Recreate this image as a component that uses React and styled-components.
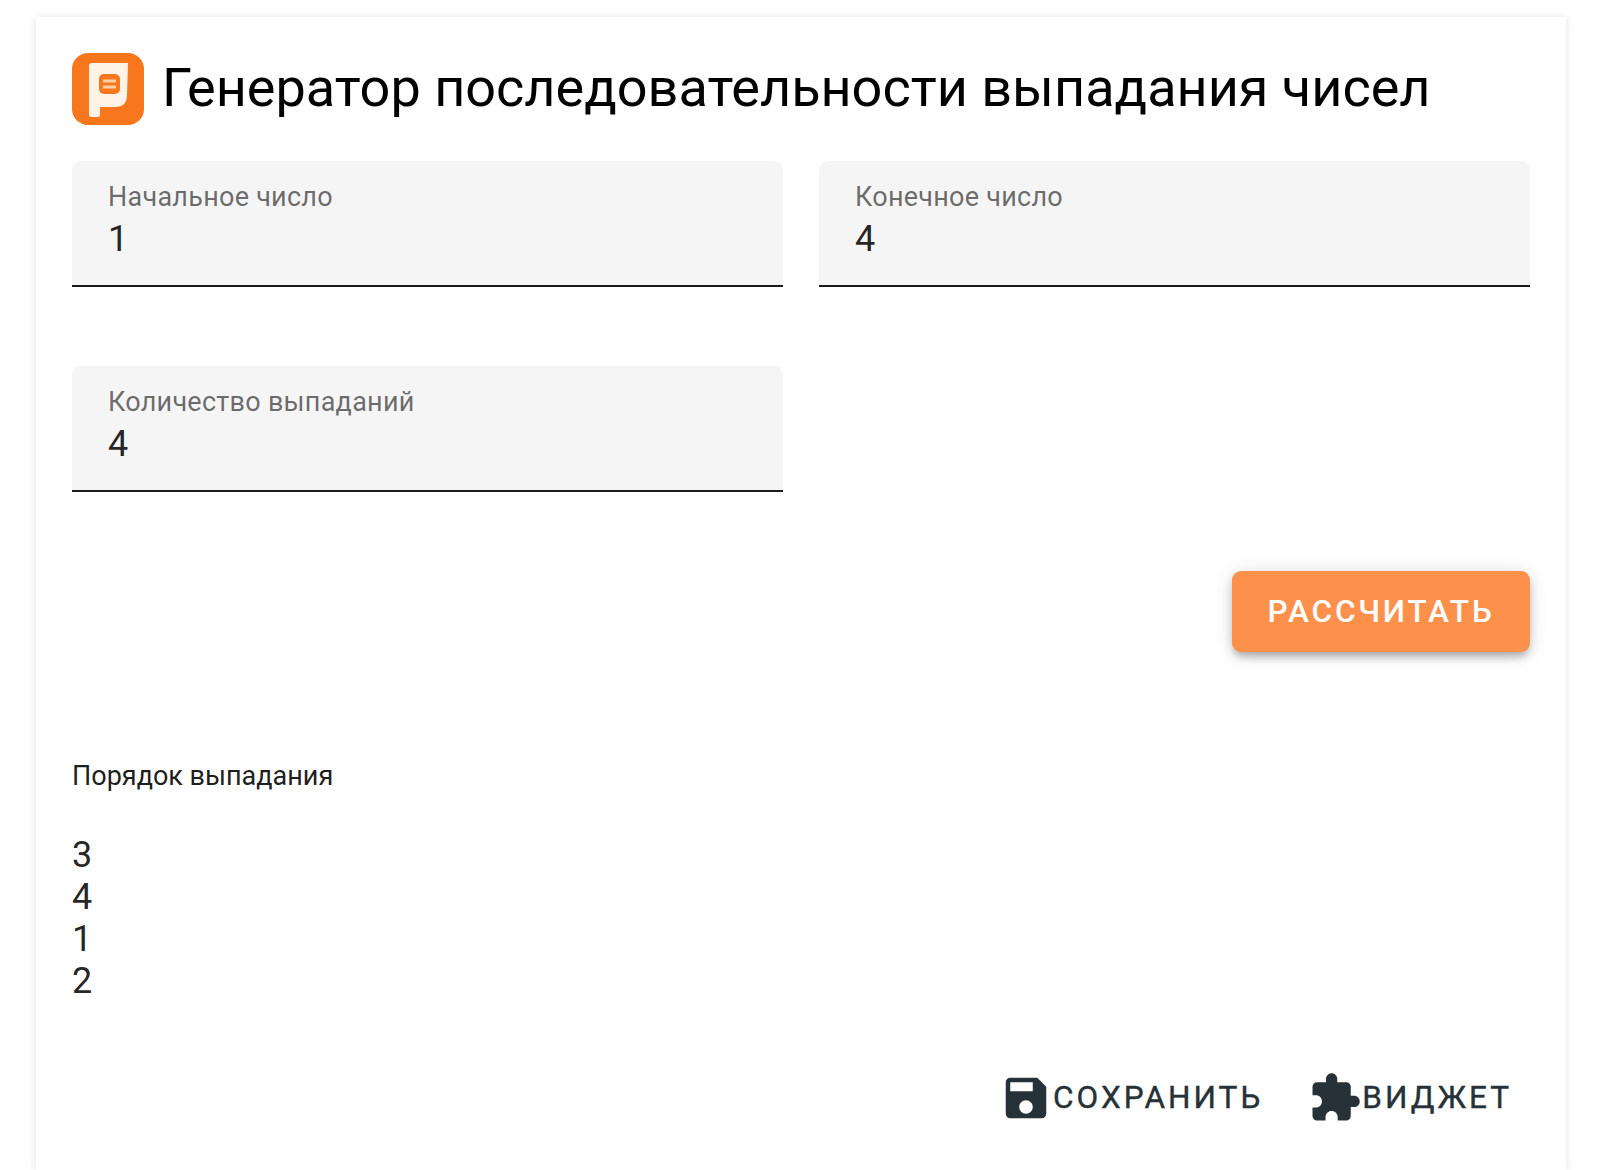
import styled, { createGlobalStyle } from "styled-components";

const GlobalStyle = createGlobalStyle`
  html, body {
    margin: 0;
    height: 1170px;
    overflow: hidden;
    background: #fff;
    font-family: Roboto, "Liberation Sans", sans-serif;
  }
`;

const Card = styled.main`
  margin: 17px 34px 0 36px;
  padding: 36px;
  height: 1153px;
  box-sizing: border-box;
  background: #fff;
  box-shadow: 0 1px 8px rgba(0, 0, 0, 0.12);
`;

const Header = styled.header`
  display: flex;
  align-items: center;
  gap: 18px;
  height: 72px;
  margin-bottom: 36px;
`;

const Title = styled.h1`
  margin: 0 0 2px;
  font-size: 54px;
  font-weight: 400;
  line-height: 70px;
  color: #000;
`;

const FieldGrid = styled.div`
  display: grid;
  grid-template-columns: 1fr 1fr;
  column-gap: 36px;
  row-gap: 79px;
`;

const Field = styled.label`
  display: flex;
  flex-direction: column;
  height: 126px;
  box-sizing: border-box;
  padding: 20px 36px 0;
  background: #f5f5f5;
  border-radius: 9px 9px 0 0;
  border-bottom: 2px solid #1b1b1b;
`;

const FieldLabel = styled.span`
  font-size: 27px;
  line-height: 32px;
  letter-spacing: 0.26px;
  color: rgba(0, 0, 0, 0.58);
`;

const FieldValue = styled.input`
  border: 0;
  padding: 0;
  margin-top: 1px;
  background: transparent;
  font: inherit;
  font-size: 36px;
  line-height: 50px;
  height: 50px;
  color: rgba(0, 0, 0, 0.87);
  outline: none;
`;

const SubmitRow = styled.div`
  display: flex;
  justify-content: flex-end;
  margin-top: 79px;
`;

const SubmitButton = styled.button`
  width: 298px;
  height: 81px;
  margin-bottom: 1px;
  border: 0;
  border-radius: 9px;
  background: #fd914c;
  color: #fff;
  font: inherit;
  font-size: 31.5px;
  font-weight: 500;
  letter-spacing: 2.8px;
  box-shadow: 0 7px 7px -4px rgba(0, 0, 0, 0.2), 0 5px 11px 0 rgba(0, 0, 0, 0.14),
    0 2px 20px 0 rgba(0, 0, 0, 0.12);
`;

const Result = styled.section`
  margin-top: 103px;
`;

const ResultLabel = styled.div`
  font-size: 27px;
  line-height: 40px;
  color: rgba(0, 0, 0, 0.9);
  margin-bottom: 38px;
`;

const ResultNumber = styled.div`
  font-size: 36px;
  line-height: 42px;
  color: rgba(0, 0, 0, 0.87);
`;

const Actions = styled.div`
  display: flex;
  justify-content: flex-end;
  gap: 9px;
  margin-top: 55px;
`;

const ActionButton = styled.button`
  display: flex;
  align-items: center;
  height: 81px;
  padding: 0 18px;
  border: 0;
  background: transparent;
  color: #263238;
  font: inherit;
  font-size: 31.5px;
  font-weight: 400;
  letter-spacing: 3px;
  -webkit-text-stroke: 0.4px #263238;

  svg {
    width: 54px;
    height: 54px;
    flex: none;
    fill: currentColor;
  }
`;

function Logo() {
  return (
    <svg width="72" height="72" viewBox="0 0 72 72" style={{ flex: "none" }}>
      <rect width="72" height="72" rx="16" fill="#f8761c" />
      <path
        fill="#fff3e8"
        d="M17 13q0-3 3-3H56L55 42c0 8-4 12-12 12H28v8q0 2-2 2h-7q-2 0-2-2Z"
      />
      <rect x="27" y="21" width="21" height="20" rx="5" fill="#f8761c" />
      <path d="M31 28h13M31 34h13" stroke="#fdd0a8" strokeWidth="3" />
    </svg>
  );
}

function SaveIcon() {
  return (
    <svg viewBox="0 0 24 24">
      <path d="M17 3H5c-1.11 0-2 .9-2 2v14c0 1.1.89 2 2 2h14c1.1 0 2-.9 2-2V7l-4-4zm-5 16c-1.66 0-3-1.34-3-3s1.34-3 3-3 3 1.34 3 3-1.34 3-3 3zm3-10H5V5h10v4z" />
    </svg>
  );
}

function PuzzleIcon() {
  return (
    <svg viewBox="0 0 24 24">
      <path d="M20.5 11H19V7c0-1.1-.9-2-2-2h-4V3.5C13 2.12 11.88 1 10.5 1S8 2.12 8 3.5V5H4c-1.1 0-1.99.9-1.99 2v3.8H3.5c1.49 0 2.7 1.21 2.7 2.7s-1.21 2.7-2.7 2.7H2V20c0 1.1.9 2 2 2h3.8v-1.5c0-1.49 1.21-2.7 2.7-2.7 1.49 0 2.7 1.21 2.7 2.7V22H17c1.1 0 2-.9 2-2v-4h1.5c1.38 0 2.5-1.12 2.5-2.5S21.88 11 20.5 11z" />
    </svg>
  );
}

const fields = [
  { label: "Начальное число", value: "1" },
  { label: "Конечное число", value: "4" },
  { label: "Количество выпаданий", value: "4" },
];

const order = [3, 4, 1, 2];

export default function App() {
  return (
    <>
      <GlobalStyle />
      <Card>
        <Header>
          <Logo />
          <Title>Генератор последовательности выпадания чисел</Title>
        </Header>
        <FieldGrid>
          {fields.map((f) => (
            <Field key={f.label}>
              <FieldLabel>{f.label}</FieldLabel>
              <FieldValue defaultValue={f.value} />
            </Field>
          ))}
        </FieldGrid>
        <SubmitRow>
          <SubmitButton>РАССЧИТАТЬ</SubmitButton>
        </SubmitRow>
        <Result>
          <ResultLabel>Порядок выпадания</ResultLabel>
          {order.map((n, i) => (
            <ResultNumber key={i}>{n}</ResultNumber>
          ))}
        </Result>
        <Actions>
          <ActionButton>
            <SaveIcon />
            СОХРАНИТЬ
          </ActionButton>
          <ActionButton>
            <PuzzleIcon />
            ВИДЖЕТ
          </ActionButton>
        </Actions>
      </Card>
    </>
  );
}
